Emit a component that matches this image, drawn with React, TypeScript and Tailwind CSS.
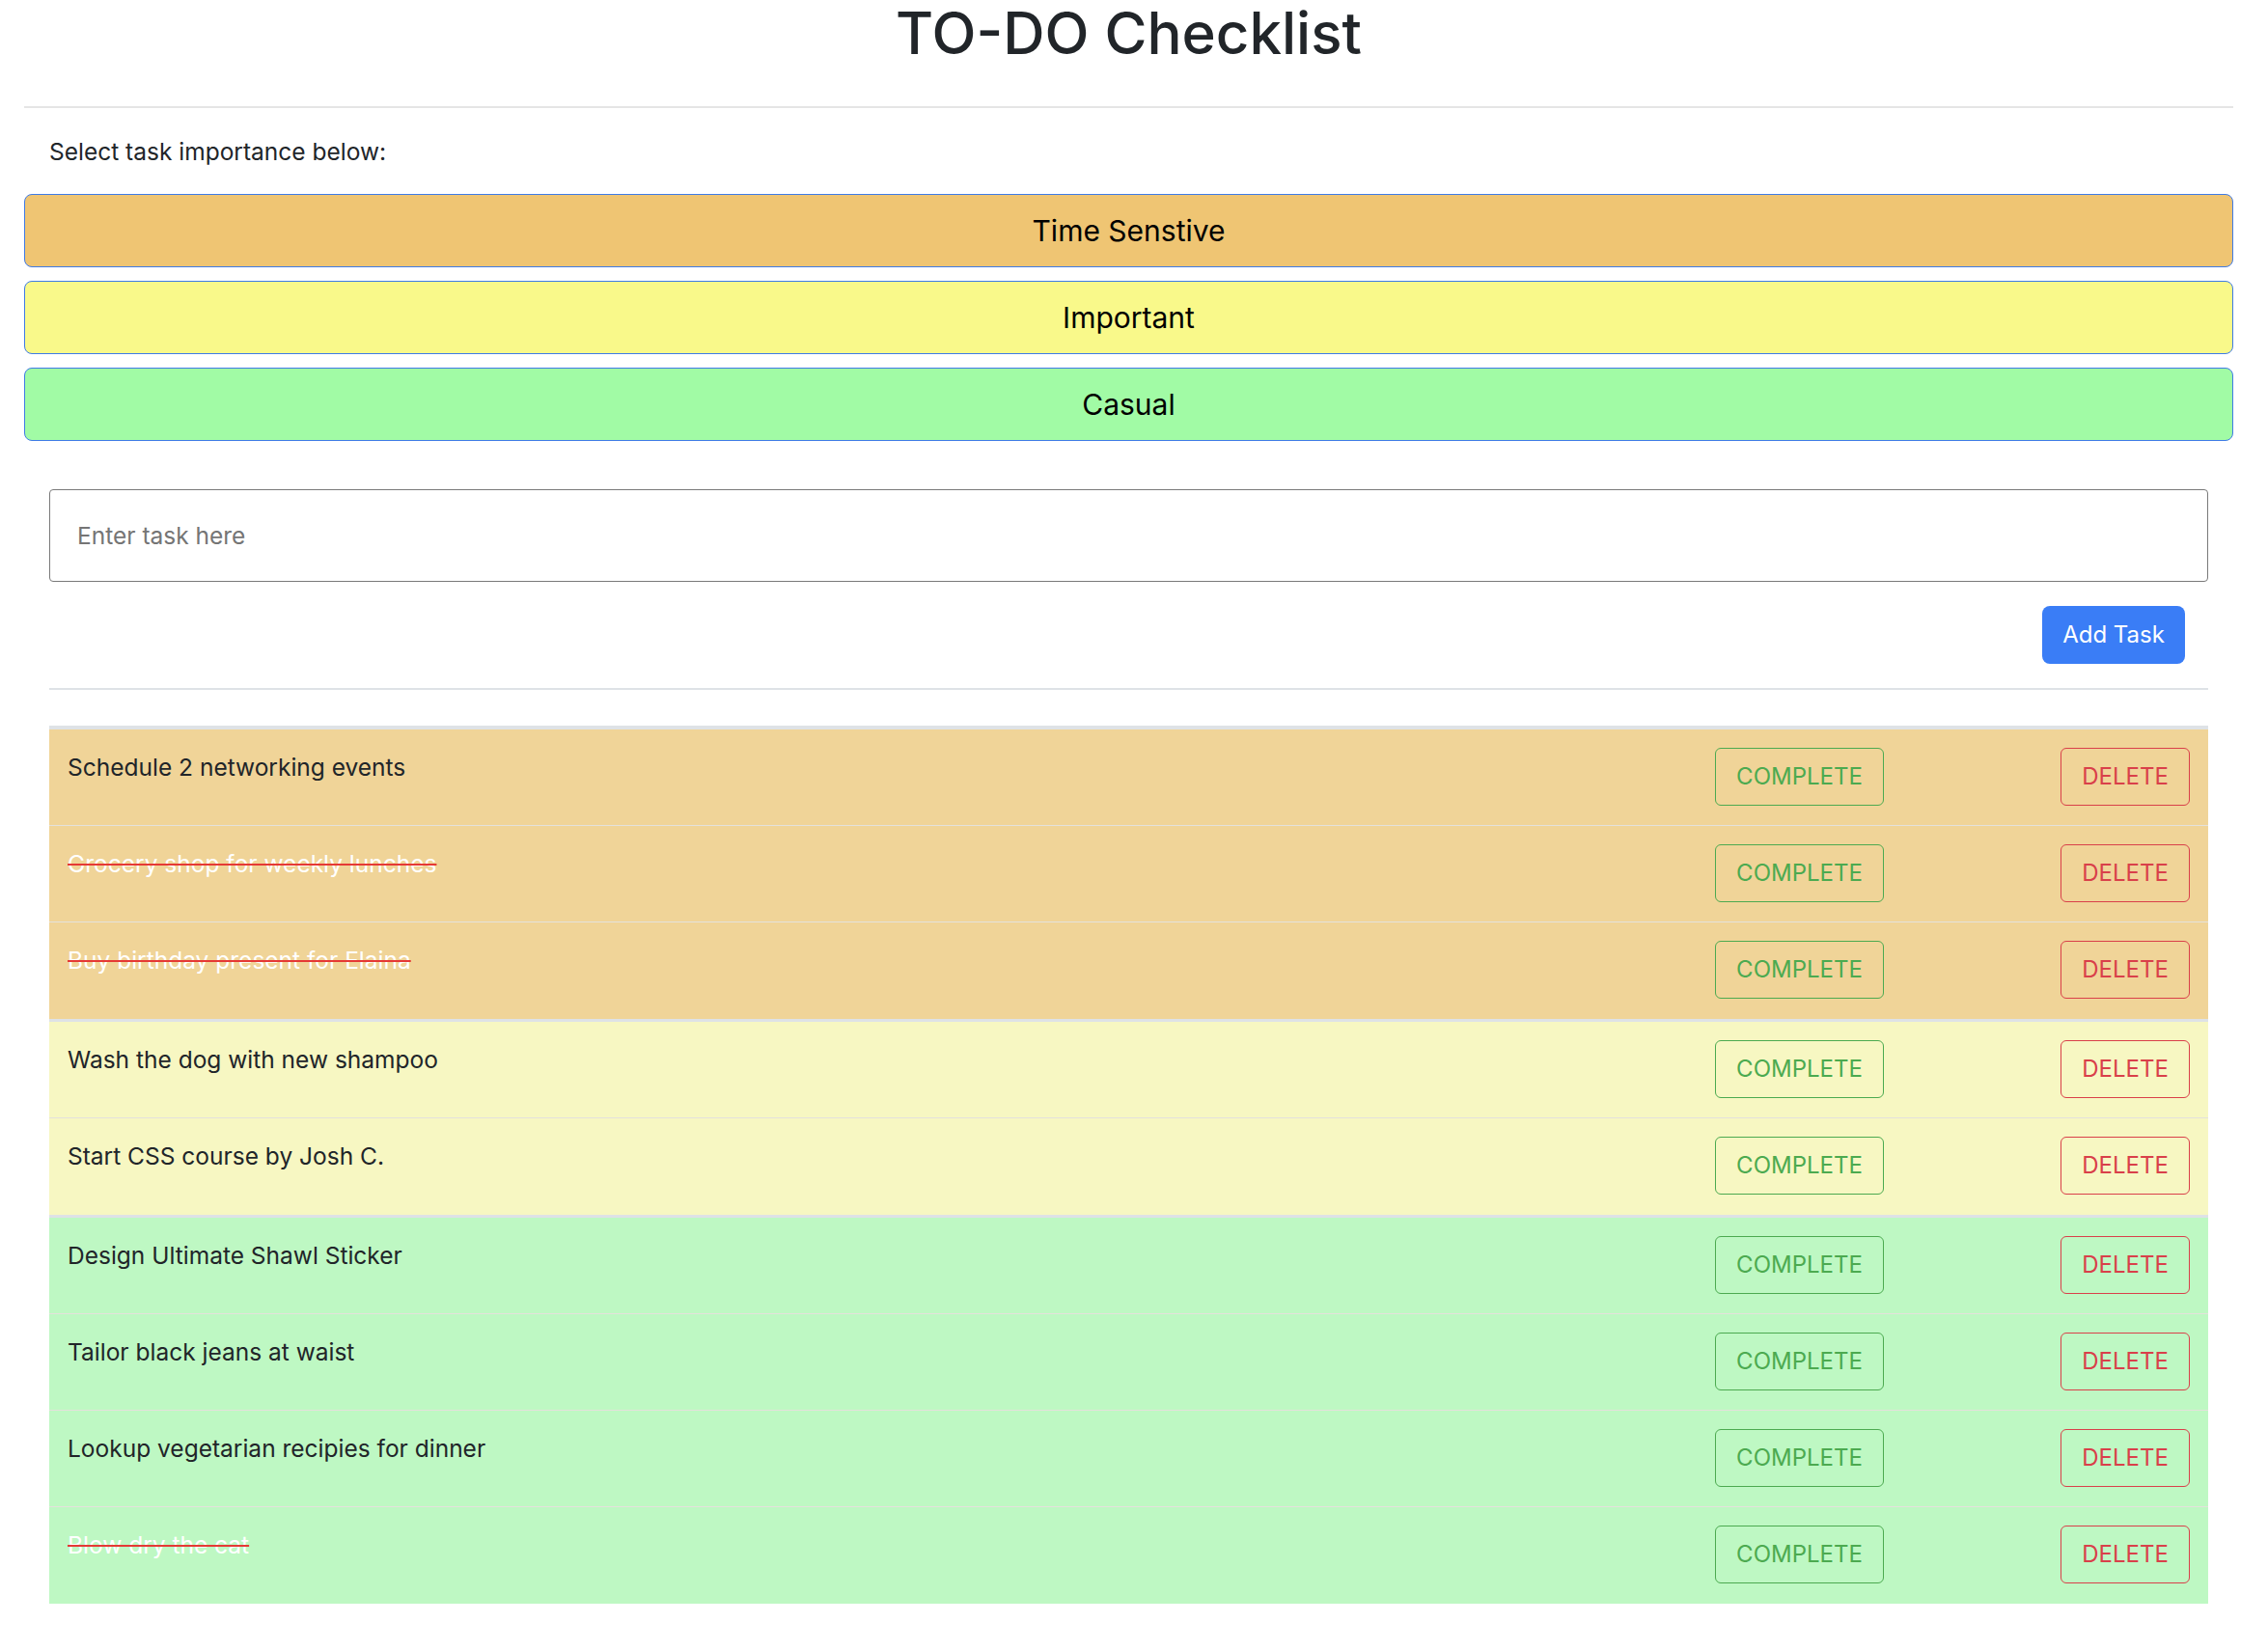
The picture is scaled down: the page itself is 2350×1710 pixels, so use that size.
import { useState } from 'react'

type Task = { id: number; text: string; level: 'time' | 'important' | 'casual'; done: boolean }

const initialTasks: Task[] = [
  { id: 1, text: 'Schedule 2 networking events', level: 'time', done: false },
  { id: 2, text: 'Grocery shop for weekly lunches', level: 'time', done: true },
  { id: 3, text: 'Buy birthday present for Elaina', level: 'time', done: true },
  { id: 4, text: 'Wash the dog with new shampoo', level: 'important', done: false },
  { id: 5, text: 'Start CSS course by Josh C.', level: 'important', done: false },
  { id: 6, text: 'Design Ultimate Shawl Sticker', level: 'casual', done: false },
  { id: 7, text: 'Tailor black jeans at waist', level: 'casual', done: false },
  { id: 8, text: 'Lookup vegetarian recipies for dinner', level: 'casual', done: false },
  { id: 9, text: 'Blow dry the cat', level: 'casual', done: true },
]

const rowBg = {
  time: 'bg-[#f0d498]',
  important: 'bg-[#f7f7c2]',
  casual: 'bg-[#bef8c3]',
}

export default function App() {
  const [tasks, setTasks] = useState(initialTasks)
  const [level, setLevel] = useState<Task['level']>('time')
  const [input, setInput] = useState('')

  const groups: Task['level'][] = ['time', 'important', 'casual']

  const addTask = () => {
    if (!input.trim()) return
    setTasks([...tasks, { id: Date.now(), text: input, level, done: false }])
    setInput('')
  }

  const toggle = (id: number) =>
    setTasks(tasks.map((t) => (t.id === id ? { ...t, done: !t.done } : t)))

  const remove = (id: number) => setTasks(tasks.filter((t) => t.id !== id))

  return (
    <div className="min-h-screen w-full bg-white text-[#212529] font-['Inter',sans-serif]">
      <div className="w-[2339px]">
        {/* Header */}
        <h1 className="pt-[4px] text-center text-[60px] leading-none font-medium h-[72px]">TO-DO Checklist</h1>
        <div className="mx-[25px] mt-[38px] h-[2px] bg-[#e5e5e5]" />

        <p className="mt-[27px] pl-[51px] text-[24.5px] leading-[36px]">Select task importance below:</p>

        {/* Priority buttons */}
        <div className="mx-[25px] mt-[26px] flex flex-col gap-[14px]">
          <button
            onClick={() => setLevel('time')}
            className="h-[76px] w-full rounded-[8px] border border-[#3f7be6] bg-[#efc573] text-[30px] text-black"
          >
            Time Senstive
          </button>
          <button
            onClick={() => setLevel('important')}
            className="h-[76px] w-full rounded-[8px] border border-[#3f7be6] bg-[#f9f98a] text-[30px] text-black"
          >
            Important
          </button>
          <button
            onClick={() => setLevel('casual')}
            className="h-[76px] w-full rounded-[8px] border border-[#3f7be6] bg-[#a1fba5] text-[30px] text-black"
          >
            Casual
          </button>
        </div>

        {/* Input */}
        <div className="mx-[51px] mt-[50px]">
          <input
            value={input}
            onChange={(e) => setInput(e.target.value)}
            placeholder="Enter task here"
            className="block h-[96px] w-full rounded-[4px] border border-[#7a7a7a] px-[28px] text-[24.5px] placeholder:text-[#757575] outline-none"
          />
          <div className="mt-[25px] flex justify-end pr-[24px]">
            <button
              onClick={addTask}
              className="h-[60px] w-[148px] rounded-[8px] bg-[#3a7df6] text-[24px] text-white"
            >
              Add Task
            </button>
          </div>
          <div className="mt-[25px] h-[2px] bg-[#dee2e6]" />

          {/* Task list */}
          <div className="mt-[37px] border-t-4 border-[#dee2e6]">
            {groups.map((g, gi) => {
              const items = tasks.filter((t) => t.level === g)
              return (
                <div key={g} className={gi < groups.length - 1 ? 'border-b-[3px] border-[#dee2e6]' : ''}>
                  {items.map((t, i) => (
                    <div
                      key={t.id}
                      className={`flex items-start h-[100px] px-[19px] pt-[19px] ${rowBg[g]} ${
                        i < items.length - 1 ? 'border-b border-[#e4e1dc]' : ''
                      }`}
                    >
                      <span
                        className={`flex-1 pt-[2px] text-[24.5px] leading-[36px] ${
                          t.done ? 'text-white line-through decoration-[#e53935] decoration-2' : ''
                        }`}
                      >
                        {t.text}
                      </span>
                      <button
                        onClick={() => toggle(t.id)}
                        className="h-[60px] w-[175px] rounded-[6px] border border-[#4caa50] text-[24px] text-[#4caa50]"
                      >
                        COMPLETE
                      </button>
                      <button
                        onClick={() => remove(t.id)}
                        className="ml-[183px] h-[60px] w-[134px] rounded-[6px] border border-[#d9404a] text-[24px] text-[#d9404a]"
                      >
                        DELETE
                      </button>
                    </div>
                  ))}
                </div>
              )
            })}
          </div>
        </div>
      </div>
    </div>
  )
}
